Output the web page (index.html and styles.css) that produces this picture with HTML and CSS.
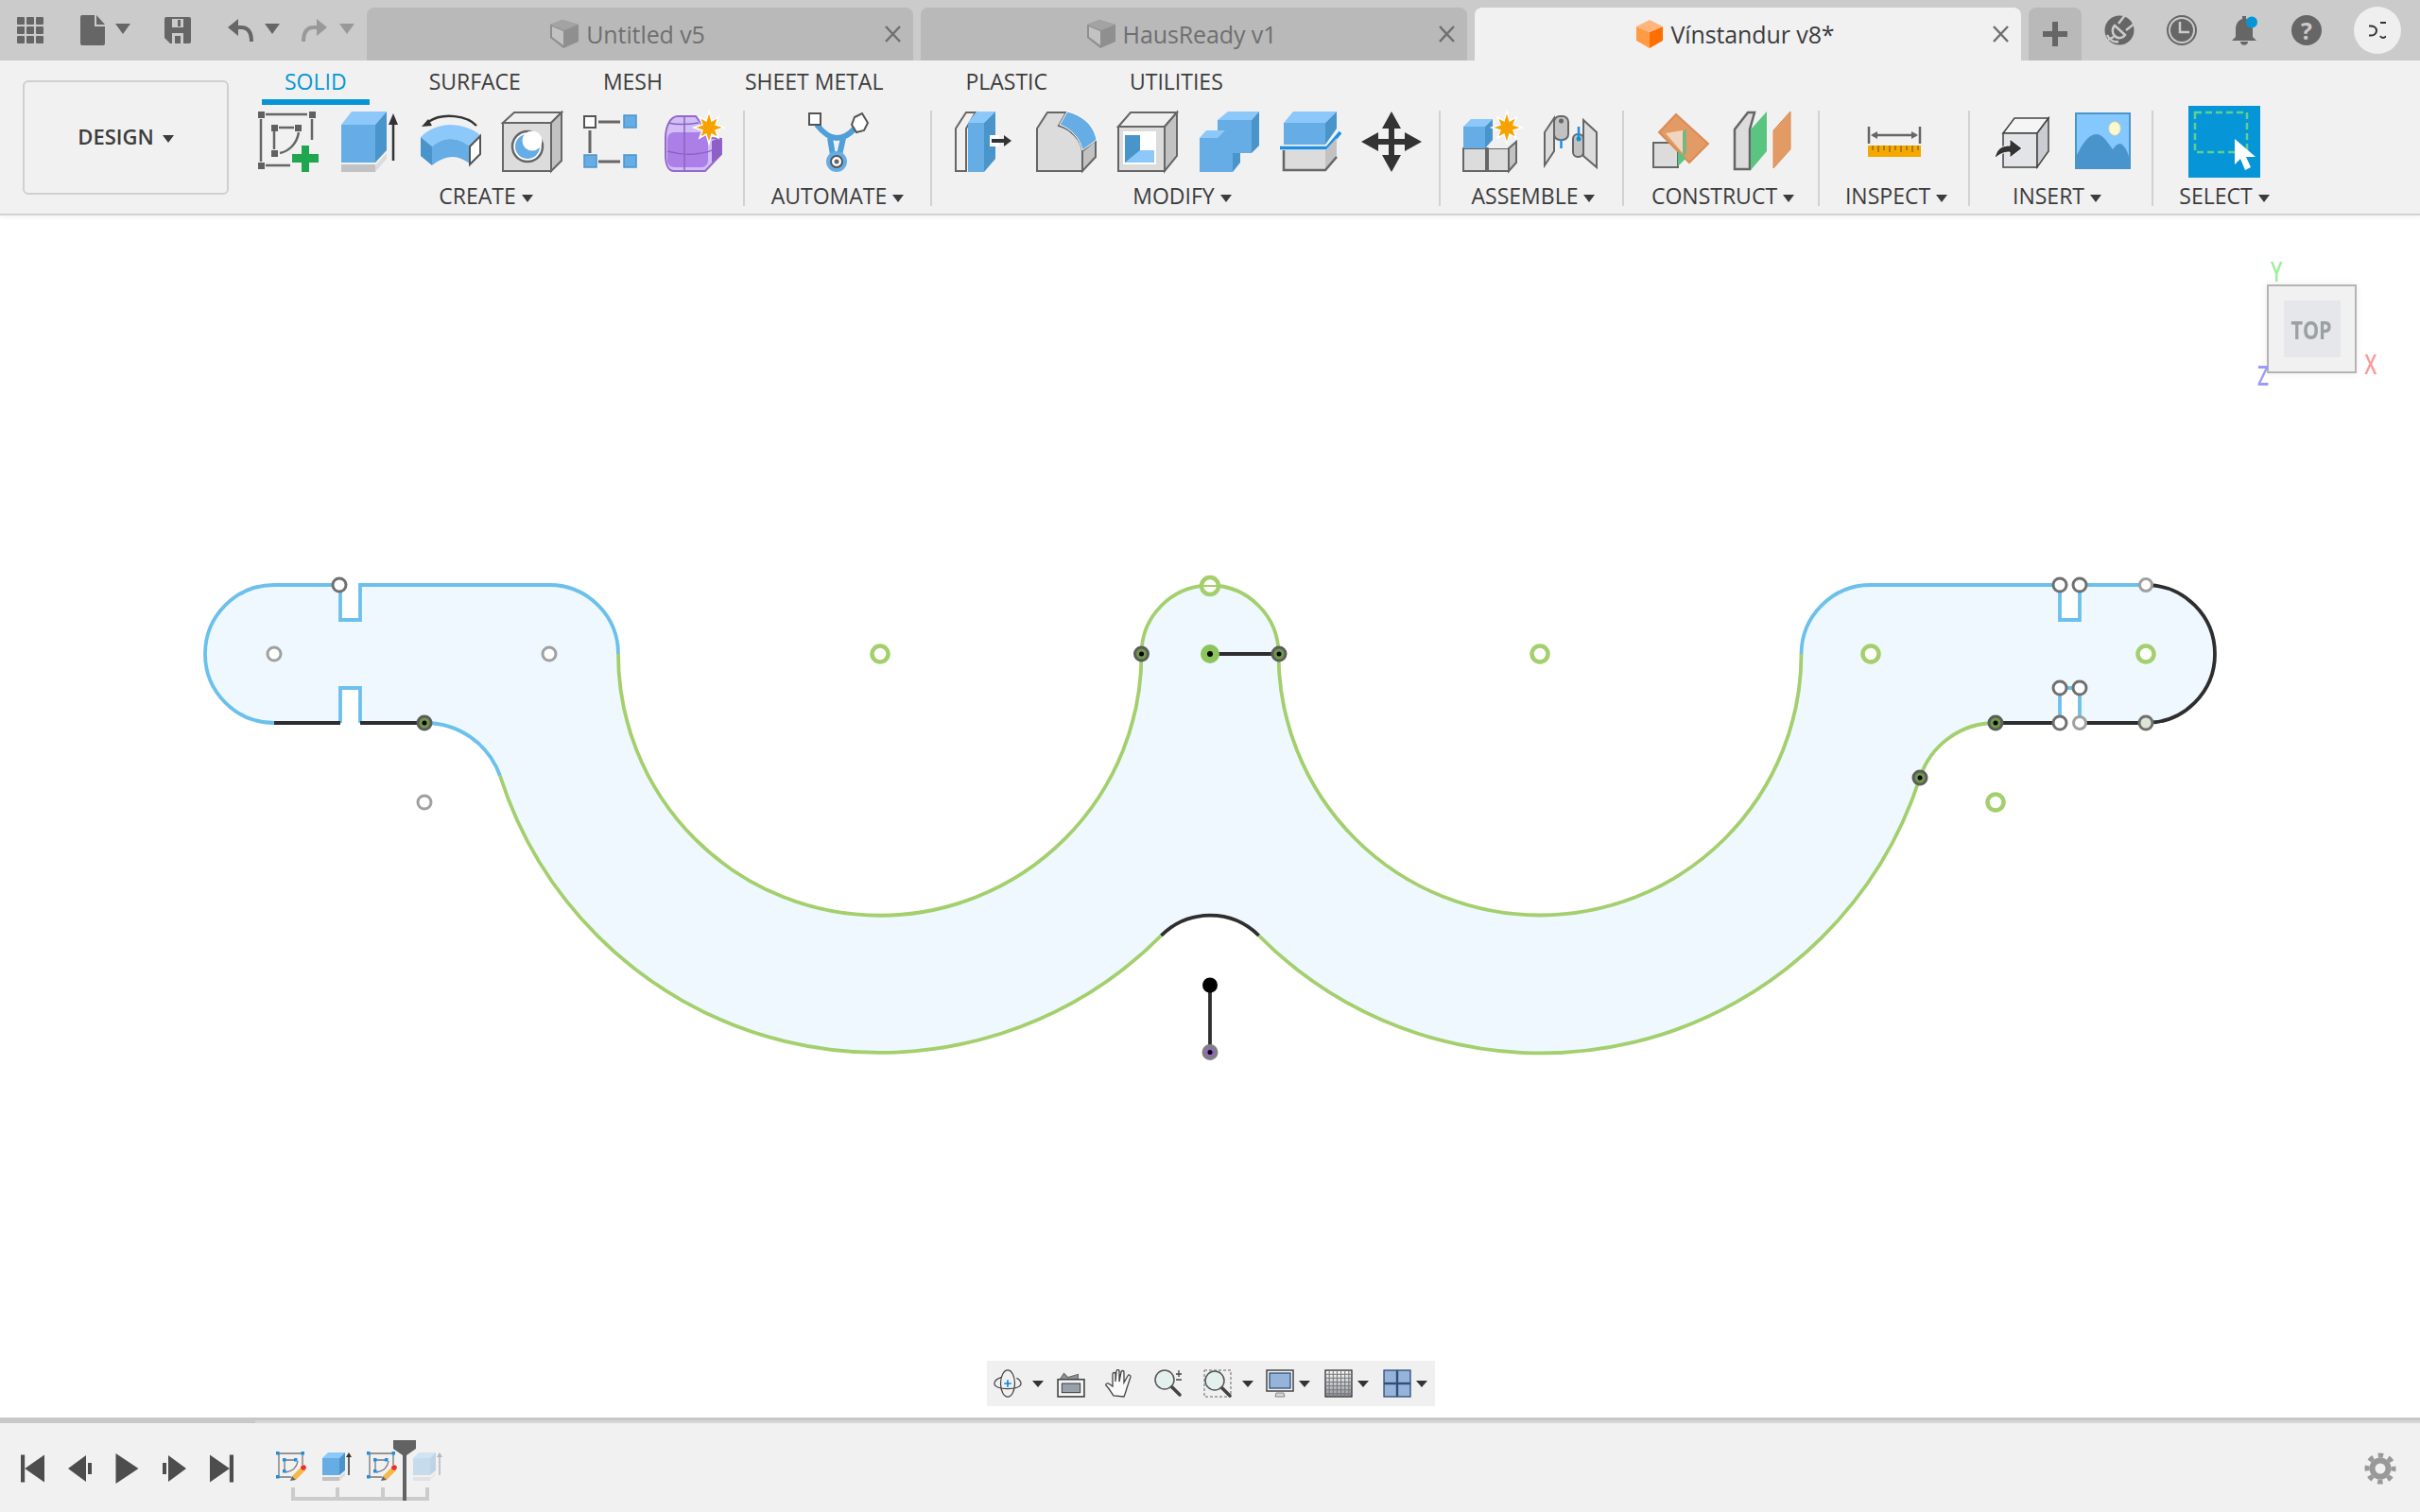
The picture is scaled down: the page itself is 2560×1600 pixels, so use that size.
FILE: index.html
```html
<!DOCTYPE html>
<html lang="en">
<head>
<meta charset="utf-8">
<title>Fusion</title>
<link rel="stylesheet" href="styles.css">
</head>
<body>
<svg class="defs" width="0" height="0" aria-hidden="true">
  <defs>
    <polygon id="star" class="star" points="0,-17 3,-7 10,-11 7,-3 16,0 7,3 10,11 3,7 0,17 -3,7 -10,11 -7,3 -16,0 -7,-3 -10,-11 -3,-7"/>
    <g id="cube-grey">
      <polygon class="tc-r" points="1,6 14,1 31,6 31,24 15,31 1,20"/>
      <polygon class="tc-t" points="1,6 14,1 31,6 16,12"/>
      <polygon class="tc-l" points="3,8 15,13 15,28 3,19"/>
    </g>
    <g id="mini-sketch">
      <path class="mini-line" d="M3 2H28M3 2V27M3 27H16M28 2V14M9 9H20M9 9V20M23 10C22 17 17 21 10 22"/>
      <rect class="mini-pt" x="0" y="0" width="3.500" height="3.500"/><rect class="mini-pt" x="26.500" y="0" width="3.500" height="3.500"/><rect class="mini-pt" x="0" y="25" width="3.500" height="3.500"/>
      <rect class="mini-pt" x="7" y="7" width="3.500" height="3.500"/><rect class="mini-pt" x="19" y="7" width="3.500" height="3.500"/><rect class="mini-pt" x="7" y="19" width="3.500" height="3.500"/>
      <polygon class="mini-pen" points="17,26 27,16 31,20 21,30"/>
      <polygon class="mini-tip" points="15,31 17,26 21,30"/>
      <circle class="mini-red" cx="29" cy="17" r="2.800"/>
    </g>
  </defs>
</svg>

<div class="app">
  <header class="titlebar">
    <div class="qat">
      <svg class="qi" width="28" height="28" viewBox="0 0 28 28"><g class="ti"><rect x="0" y="0" width="8" height="8" rx="1"/><rect x="10" y="0" width="8" height="8" rx="1"/><rect x="20" y="0" width="8" height="8" rx="1"/><rect x="0" y="10" width="8" height="8" rx="1"/><rect x="10" y="10" width="8" height="8" rx="1"/><rect x="20" y="10" width="8" height="8" rx="1"/><rect x="0" y="20" width="8" height="8" rx="1"/><rect x="10" y="20" width="8" height="8" rx="1"/><rect x="20" y="20" width="8" height="8" rx="1"/></g></svg>
      <svg class="qi" width="26" height="32" viewBox="0 0 26 32"><path class="ti" d="M2 0H15V12H26V30Q26 32 24 32H2Q0 32 0 30V2Q0 0 2 0ZM17 0L26 10H17Z"/></svg>
      <i class="caret caret-q"></i>
      <svg class="qi" width="28" height="28" viewBox="0 0 28 28"><path class="ti" d="M2 0H26Q28 0 28 2V26Q28 28 26 28H6L0 22V2Q0 0 2 0Z"/><rect class="tb" x="8" y="2" width="12" height="9"/><rect class="ti" x="14" y="3" width="3" height="7"/><rect class="tb" x="8" y="17" width="12" height="11"/><rect class="ti" x="11" y="20" width="6" height="8"/></svg>
      <svg class="qi" width="27" height="24" viewBox="0 0 27 24"><polygon class="ti" points="0,9 11,0 11,18"/><path class="ts" d="M9 9H14C21 9 25 14 25 24"/></svg>
      <i class="caret caret-q"></i>
      <svg class="qi" width="27" height="24" viewBox="0 0 27 24"><polygon class="ti-off" points="27,9 16,0 16,18"/><path class="ts-off" d="M18 9H13C6 9 2 14 2 24"/></svg>
      <i class="caret caret-q caret-off"></i>
    </div>
    <div class="tabs">
      <div class="doc-tab">
        <div class="doc-title"><svg width="32" height="32" viewBox="0 0 32 32"><use href="#cube-grey"/></svg><span>Untitled v5</span></div>
        <svg class="close" width="19" height="18" viewBox="0 0 19 18"><path class="close-x" d="M2 1L17 17M17 1L2 17"/></svg>
      </div>
      <div class="doc-tab">
        <div class="doc-title"><svg width="32" height="32" viewBox="0 0 32 32"><use href="#cube-grey"/></svg><span>HausReady v1</span></div>
        <svg class="close" width="19" height="18" viewBox="0 0 19 18"><path class="close-x" d="M2 1L17 17M17 1L2 17"/></svg>
      </div>
      <div class="doc-tab doc-tab-active">
        <div class="doc-title"><svg width="30" height="32" viewBox="0 0 30 32"><polygon class="oc-r" points="15,14 29,8 29,23 15,31"/><polygon class="oc-l" points="1,8 15,14 15,31 1,23"/><polygon class="oc-t" points="15,1 29,8 15,14 1,8"/></svg><span>Vínstandur v8*</span></div>
        <svg class="close" width="19" height="18" viewBox="0 0 19 18"><path class="close-x" d="M2 1L17 17M17 1L2 17"/></svg>
      </div>
      <div class="new-tab"><svg width="26" height="26" viewBox="0 0 26 26"><path class="ti" d="M10 0H16V10H26V16H16V26H10V16H0V10H10Z"/></svg></div>
    </div>
    <div class="tools">
      <svg width="32" height="32" viewBox="0 0 32 32"><circle class="ti" cx="16" cy="16" r="15.500"/><path class="tool-cut" d="M22 0L15 9M32 9L23 16M11 11L22 21C19 25 14 25 11 22C8 19 8 14 11 11ZM10 23L4 26M3 21C6 27 11 29 15 28"/></svg>
      <svg width="32" height="32" viewBox="0 0 32 32"><circle class="tool-ring" cx="16" cy="16" r="15"/><circle class="ti" cx="16" cy="16" r="12"/><path class="tool-cut" d="M14 7V18H24"/></svg>
      <svg width="32" height="32" viewBox="0 0 32 32"><path class="ti" d="M14 1H18V4C23 6 25 10 25 15V23L29 27H3L7 23V15C7 10 9 6 14 4ZM12 28H20C20 33 12 33 12 28Z"/><circle class="bell-dot" cx="24" cy="7.500" r="6"/></svg>
      <div class="help">?</div>
      <div class="avatar"><svg width="18" height="18" viewBox="0 0 18 18"><path class="avatar-s" d="M0 4.500C5 4 8 6 8 9.500C8 13 5 15 0 14.500M12 1H18M12 15C13 17.500 17 17.500 18 15"/></svg></div>
    </div>
  </header>

  <section class="ribbon">
    <button class="design-btn">DESIGN<i class="caret caret-d"></i></button>
    <div class="ribbon-main">
      <nav class="ribbon-tabs">
        <span class="rtab rtab-active">SOLID</span>
        <span class="rtab">SURFACE</span>
        <span class="rtab">MESH</span>
        <span class="rtab">SHEET METAL</span>
        <span class="rtab">PLASTIC</span>
        <span class="rtab">UTILITIES</span>
      </nav>
      <div class="groups">
        <div class="group g-create">
          <div class="icons">
            <svg class="ic" viewBox="0 0 64 64"><path class="ln" d="M8 3H52M3 8V53M8 57H34M57 8V30M22 17H38M17 21V40M43 22C41 34 33 42 23 44"/><rect class="pt" x="0" y="0" width="7" height="7"/><rect class="pt" x="54" y="0" width="7" height="7"/><rect class="pt" x="0" y="54" width="7" height="7"/><rect class="pt" x="14" y="14" width="7" height="7"/><rect class="pt" x="39" y="14" width="7" height="7"/><rect class="pt" x="14" y="41" width="7" height="7"/><path class="plus" d="M46 36H54V45H64V54H54V64H46V54H36V45H46Z"/></svg>
            <svg class="ic" viewBox="0 0 64 64"><polygon class="b1" points="2,14 13,0 50,0 38,14"/><rect class="b2" x="2" y="14" width="36" height="40"/><polygon class="b3" points="38,14 50,0 50,41 38,54"/><rect class="gy3" x="2" y="56" width="36" height="8"/><polygon class="gy2" points="38,64 50,50 50,44 38,57"/><path class="arrow-l" d="M57 6V52"/><polygon class="dk" points="57,2 62,14 52,14"/></svg>
            <svg class="ic" viewBox="0 0 64 64"><path class="arc-ar" d="M59 15C50 5 24 0 8 11"/><polygon class="dk" points="1,16 8,8 12,15"/><path class="b1" d="M0 27C8 19 20 14 31 14C43 14 55 18 63 25L52 37C46 32 39 29 31 29C24 29 18 32 12 37Z"/><path class="b2" d="M12 37C18 32 24 29 31 29C39 29 46 32 52 37V55C46 51 40 48 34 48C26 48 18 52 12 57Z"/><path class="b3" d="M0 27L12 37V57L0 47Z"/><polygon class="white-ol" points="52,37 63,26 63,45 52,56"/></svg>
            <svg class="ic" viewBox="0 0 64 64"><polygon class="gy1 ol" points="1,12 13,1 63,1 52,12"/><rect class="gy2 ol" x="1" y="12" width="51" height="51"/><polygon class="gy3 ol" points="52,12 63,1 63,52 52,63"/><circle class="ring" cx="27" cy="37" r="16"/><circle class="b2" cx="27" cy="37" r="13"/><circle class="white" cx="32" cy="31" r="10.500"/></svg>
            <svg class="ic" viewBox="0 0 64 64"><rect class="white-ol" x="1" y="5" width="12" height="12"/><rect class="b2 blue-ol" x="43" y="4" width="13" height="13"/><rect class="b2 blue-ol" x="1" y="46" width="13" height="13"/><rect class="b2 blue-ol" x="43" y="46" width="13" height="13"/><path class="ln ln-thick" d="M16 11H39M16 53H39M7 20V44"/></svg>
            <svg class="ic" viewBox="0 0 64 64"><path class="p1" d="M1 28C1 14 7 5 14 5H33L50 28L60 29V45L43 63H10C4 63 1 56 1 46Z"/><rect class="p2" x="3" y="22" width="43" height="37" rx="7"/><polygon class="p3" points="50,31 60,28 60,46 50,54"/><path class="p-ln" d="M21 6V62M3 42C20 47 44 47 60 36M4 12C12 14 24 14 36 12"/><use href="#star" x="47" y="17"/></svg>
          </div>
          <div class="glabel">CREATE<i class="caret"></i></div>
        </div>
        <div class="group g-auto">
          <div class="icons">
            <svg class="ic" viewBox="0 0 64 64"><path class="y-arm" d="M10 14C18 24 24 28 31 28C38 28 44 25 50 18M24 28L27 46M38 28L34 46"/><rect class="white-ol" x="2" y="2" width="12" height="12"/><polygon class="white-ol" points="50,6 58,2 64,12 60,20 52,22 47,14"/><circle class="b2" cx="31" cy="53" r="11"/><circle class="white-ol" cx="31" cy="53" r="6"/><circle class="gray-dot" cx="31" cy="53" r="2.500"/></svg>
          </div>
          <div class="glabel">AUTOMATE<i class="caret"></i></div>
        </div>
        <div class="group g-modify">
          <div class="icons">
            <svg class="ic" viewBox="0 0 64 64"><path class="gy1 ol" d="M12 63H1V18L12 1H22L12 18Z"/><polygon class="b1" points="14,12 23,0 43,0 31,12"/><rect class="b2" x="14" y="12" width="17" height="52"/><polygon class="b3" points="31,12 43,0 43,50 31,64"/><rect class="white" x="37" y="25" width="10" height="12"/><path class="arrow-l arrow-b" d="M39 31H54"/><polygon class="dk" points="52,25 60,31 52,37"/></svg>
            <svg class="ic" viewBox="0 0 64 64"><path class="gy2 ol" d="M1 63V18L12 1H32L24 15C36 18 48 30 49 42V63Z"/><polygon class="gy3 ol" points="49,42 63,30 63,48 49,63"/><path class="b2 arc-w" d="M33 0C50 4 62 16 64 30L49 41C47 29 37 18 25 14Z"/></svg>
            <svg class="ic" viewBox="0 0 64 64"><polygon class="gy1 ol" points="1,16 14,1 63,1 50,16"/><rect class="gy2 ol" x="1" y="16" width="49" height="47"/><polygon class="gy3 ol" points="50,16 63,1 63,47 50,63"/><rect class="white" x="6" y="21" width="35" height="35"/><rect class="b3" x="8" y="25" width="16" height="29"/><polygon class="b1" points="8,54 24,41 39,41 39,54"/></svg>
            <svg class="ic" viewBox="0 0 64 64"><polygon class="b1" points="20,9 31,0 64,0 56,9"/><rect class="b2" x="20" y="9" width="36" height="35"/><polygon class="b3" points="56,9 64,0 64,36 56,44"/><polygon class="b1" points="1,28 8,20 28,20 20,28"/><rect class="b2" x="1" y="28" width="35" height="36"/><polygon class="b3" points="36,44 44,44 44,54 36,64"/></svg>
            <svg class="ic" viewBox="0 0 64 64"><polygon class="b1" points="4,12 14,0 60,0 48,12"/><rect class="b2" x="4" y="12" width="44" height="23"/><polygon class="b3" points="48,12 60,0 60,18 48,35"/><path class="bl-line" d="M0 38.500H50L64 22"/><rect class="gy2" x="4" y="41" width="44" height="21"/><polygon class="gy3" points="48,41 60,28 60,48 48,62"/><path class="ol-line" d="M4 41V62H48L60 48"/></svg>
            <svg class="ic" viewBox="0 0 64 64"><path class="dk" d="M32 0L42 18H35V29H46V22L64 32L46 42V35H35V46H42L32 64L22 46H29V35H18V42L0 32L18 22V29H29V18H22Z"/></svg>
          </div>
          <div class="glabel">MODIFY<i class="caret"></i></div>
        </div>
        <div class="group g-assemble">
          <div class="icons">
            <svg class="ic" viewBox="0 0 64 64"><rect class="gy2 ol" x="1" y="39" width="24" height="24"/><rect class="gy2 ol" x="27" y="39" width="22" height="24"/><polygon class="gy1" points="27,39 36,32 58,32 49,39"/><polygon class="gy3 ol" points="49,39 57,32 57,54 49,63"/><polygon class="b1" points="1,16 9,8 32,8 24,16"/><rect class="b2" x="1" y="16" width="23" height="23"/><polygon class="b3" points="24,16 32,8 32,30 24,39"/><use href="#star" x="47" y="17"/></svg>
            <svg class="ic" viewBox="0 0 64 64"><polygon class="gy2 ol" points="1,57 1,22 11,7 11,42"/><polygon class="gy2 ol" points="42,9 56,22 56,59 42,47"/><rect class="gy3 ol" x="11" y="5" width="15" height="25" rx="6"/><rect class="gy3 ol" x="31" y="24" width="11" height="24" rx="5"/><path class="bl-line bl-thin" d="M18.500 29V39M37 16V29"/><circle class="gray-dot" cx="18.500" cy="10" r="2.500"/><circle class="bell-dot" cx="37" cy="29" r="2.500"/></svg>
          </div>
          <div class="glabel">ASSEMBLE<i class="caret"></i></div>
        </div>
        <div class="group g-construct">
          <div class="icons">
            <svg class="ic" viewBox="0 0 64 64"><rect class="gy2 ol-open" x="1" y="33" width="26" height="26"/><polygon class="org-pl" points="25,3 59,34 39,54 7,22"/><polygon class="org-in" points="14,23 32,20 32,44"/><polygon class="gn" points="27,58 35,50 27,42"/><polygon class="gn-l" points="32,22 36,18 36,44 32,48"/></svg>
            <svg class="ic" viewBox="0 0 64 64"><path class="gy2 ol-open2" d="M1 61V19L15 1H22L17 19V61Z"/><polygon class="gn" points="18,62 35,42 35,0 18,19"/><polygon class="org" points="42,60 60,40 60,0 42,20"/></svg>
          </div>
          <div class="glabel">CONSTRUCT<i class="caret"></i></div>
        </div>
        <div class="group g-inspect">
          <div class="icons">
            <svg class="ic" viewBox="0 0 64 64"><path class="ln" d="M5 16V34M59 16V34M9 25H55"/><polygon class="ln-f" points="7,25 14,21 14,29"/><polygon class="ln-f" points="57,25 50,21 50,29"/><rect class="ruler" x="4" y="36" width="56" height="12"/><path class="ruler-t" d="M9 36V41M15 36V43M21 36V41M27 36V43M33 36V41M39 36V43M45 36V41M51 36V43M57 36V41"/></svg>
          </div>
          <div class="glabel">INSPECT<i class="caret"></i></div>
        </div>
        <div class="group g-insert">
          <div class="icons">
            <svg class="ic" viewBox="0 0 64 64"><polygon class="c-top" points="10,23 22,7 58,7 46,23"/><rect class="c-front" x="10" y="23" width="36" height="36"/><polygon class="c-side" points="46,23 58,7 58,42 46,59"/><path class="dk-outline" d="M1 50C3 38 10 36 17 36V29L30 39L17 49V43C11 43 6 45 1 50Z"/></svg>
            <svg class="ic" viewBox="0 0 64 64"><rect class="img-sky" x="1" y="2" width="57" height="58"/><path class="b3" d="M2 46C10 30 16 24 23 24C30 24 35 34 40 40C44 34 48 32 51 36C54 39 56 44 57 48V59H2Z"/><ellipse class="sun" cx="42" cy="18" rx="6" ry="7"/></svg>
          </div>
          <div class="glabel">INSERT<i class="caret"></i></div>
        </div>
        <div class="group g-select">
          <div class="icons">
            <svg class="sel" viewBox="0 0 76 76"><rect class="sel-bg" width="76" height="76"/><rect class="sel-dash" x="7" y="7" width="55" height="42"/><path class="white" d="M49 35V62L55 56L60 68L66 65L61 54L71 54Z"/></svg>
          </div>
          <div class="glabel">SELECT<i class="caret"></i></div>
        </div>
      </div>
    </div>
  </section>

  <main class="canvas">
    <svg class="sketch" viewBox="0 228 2560 1272" width="2560" height="1272">
      <path class="profile" d="M290 619H360V656H381V619H581A73 73 0 0 1 654 692A276.500 276.500 0 0 0 1207.500 692A72.500 72.500 0 0 1 1352.500 692A276.500 276.500 0 0 0 1905.500 692A73.500 73.500 0 0 1 1979 619H2179V656H2200V619H2270A73 73 0 0 1 2270 765H2200V728H2179V765H2111A84 84 0 0 0 2031 823A421 421 0 0 1 1331.600 990A73 73 0 0 0 1228.400 990A421 421 0 0 1 529 821A84 84 0 0 0 449 765H381V728H360V765H290A73 73 0 0 1 290 619Z"/>
      <path class="s-blue" d="M290 765A73 73 0 0 1 290 619H360V656H381V619H581A73 73 0 0 1 654 692M360 765V728H381V765M449 765A84 84 0 0 1 529 821M1905.500 692A73.500 73.500 0 0 1 1979 619H2179V656H2200V619H2270M2179 765V728H2200V765"/>
      <path class="s-green" d="M654 692A276.500 276.500 0 0 0 1207.500 692A72.500 72.500 0 0 1 1352.500 692A276.500 276.500 0 0 0 1905.500 692M529 821A421 421 0 0 0 1228.400 990M1331.600 990A421 421 0 0 0 2031 823A84 84 0 0 1 2111 765"/>
      <path class="s-black" d="M290 765H360M381 765H449M2111 765H2179M2200 765H2270A73 73 0 0 0 2270 619M1228.400 990A73 73 0 0 1 1331.600 990M1280 1042V1113M1280 692H1353"/>
      <g class="pt-grey">
        <circle cx="290" cy="692" r="7"/><circle cx="581" cy="692" r="7"/><circle cx="449" cy="849" r="7"/><circle cx="2270" cy="619" r="6.500"/><circle cx="2200" cy="765" r="6.500"/>
      </g>
      <g class="pt-dark">
        <circle cx="359" cy="619" r="7"/><circle cx="2179" cy="619" r="7"/><circle cx="2200" cy="619" r="7"/><circle cx="2179" cy="728" r="7"/><circle cx="2200" cy="728" r="7"/><circle cx="2179" cy="765" r="7"/>
      </g>
      <g class="pt-green">
        <circle cx="931" cy="692" r="8.500"/><circle cx="1629" cy="692" r="8.500"/><circle cx="1979" cy="692" r="8.500"/><circle cx="2270" cy="692" r="8.500"/><circle cx="2111" cy="849" r="8.500"/><circle cx="1280" cy="620" r="9"/>
      </g>
      <path class="s-green s-thin" d="M1272 620H1288"/>
      <circle class="pt-mist" cx="2270" cy="765" r="7"/>
      <g class="pt-on">
        <circle cx="449" cy="765" r="7"/><circle cx="1207.500" cy="692" r="7"/><circle cx="1353" cy="692" r="7"/><circle cx="2111" cy="765" r="7"/><circle cx="2031" cy="823" r="7"/>
      </g>
      <circle class="pt-center" cx="1280" cy="692" r="10"/>
      <circle class="pt-purple" cx="1280" cy="1113.500" r="7"/>
      <g class="pt-core">
        <circle cx="449" cy="765" r="2.500"/><circle cx="1207.500" cy="692" r="2.500"/><circle cx="1353" cy="692" r="2.500"/><circle cx="2111" cy="765" r="2.500"/><circle cx="2031" cy="823" r="2.500"/><circle cx="1280" cy="692" r="3"/><circle cx="1280" cy="1113.500" r="2.500"/><circle cx="1280" cy="1042.500" r="8"/>
      </g>
    </svg>

    <div class="viewcube">
      <span class="axis axis-y">Y</span>
      <div class="cube-face"><div class="cube-inner"><span>TOP</span></div></div>
      <span class="axis axis-x">X</span>
      <span class="axis axis-z">Z</span>
    </div>

    <div class="navbar">
      <svg class="nv" viewBox="0 0 32 32"><ellipse class="nv-l" cx="16" cy="16" rx="8" ry="15"/><path class="nv-l" d="M9 9C3 11 1 14 1 16C1 20 8 22 16 22C24 22 31 20 31 16C31 14 29 11 26 10"/><path class="nv-plus" d="M16 12V20M12 16H20"/></svg>
      <i class="caret caret-n"></i>
      <svg class="nv" viewBox="0 0 28 28"><polygon class="nv-gray" points="3,10 7,4 11,8 21,5 21,10"/><rect class="nv-frame" x="1" y="10" width="26" height="17"/><rect class="nv-grad" x="5" y="14" width="18" height="9"/></svg>
      <svg class="nv" viewBox="0 0 30 30"><path class="nv-hand" d="M9 28C6 24 5 21 1 17C0 15 3 14 5 16L8 18V5C8 3 11 3 11 5V13L12 2C12 0 15 0 15 2V13L17 3C17 1 20 1 20 3V14L24 7C25 5 27 6 27 8L23 20C22 24 21 26 20 29Z"/></svg>
      <svg class="nv" viewBox="0 0 30 30"><circle class="nv-glass" cx="11" cy="11" r="10"/><path class="nv-handle" d="M19 19L27 27"/><path class="nv-l" d="M23 5H29M26 1V8M23 11H29"/></svg>
      <svg class="nv" viewBox="0 0 30 30"><rect class="nv-dash" x="1" y="1" width="28" height="28"/><circle class="nv-glass" cx="12" cy="12" r="10"/><path class="nv-handle" d="M20 20L28 28"/></svg>
      <i class="caret caret-n"></i>
      <svg class="nv" viewBox="0 0 30 30"><rect class="nv-frame" x="1" y="1" width="28" height="22"/><rect class="nv-blue" x="4" y="4" width="22" height="16"/><path class="nv-stand" d="M11 25H19L20 29H10Z"/></svg>
      <i class="caret caret-n"></i>
      <svg class="nv" viewBox="0 0 29 29"><defs><linearGradient id="gridfade" x1="0" y1="0" x2="0" y2="1"><stop offset="0" stop-color="#ffffff"/><stop offset="1" stop-color="#8f96a3"/></linearGradient></defs><rect class="nv-gridbg" x="1" y="1" width="27" height="27"/><path class="nv-grid" d="M5 1V28M9 1V28M13 1V28M17 1V28M21 1V28M25 1V28M1 5H28M1 9H28M1 13H28M1 17H28M1 21H28M1 25H28"/></svg>
      <i class="caret caret-n"></i>
      <svg class="nv" viewBox="0 0 29 29"><g class="nv-blue"><rect x="1" y="1" width="13" height="13"/><rect x="15" y="1" width="13" height="13"/><rect x="1" y="15" width="13" height="13"/><rect x="15" y="15" width="13" height="13"/></g></svg>
      <i class="caret caret-n"></i>
    </div>
  </main>

  <footer class="timeline">
    <div class="player">
      <svg class="pb" viewBox="0 0 24 28"><path class="pb-f" d="M0 0H4V28H0ZM24 0V28L4 14Z"/></svg>
      <svg class="pb" viewBox="0 0 25 28"><path class="pb-f" d="M19 0V28L0 14ZM21 8H25V20H21Z"/></svg>
      <svg class="pb" viewBox="0 0 24 32"><path class="pb-f" d="M0 0L24 16L0 32Z"/></svg>
      <svg class="pb" viewBox="0 0 25 28"><path class="pb-f" d="M6 0V28L25 14ZM0 8H4V20H0Z"/></svg>
      <svg class="pb" viewBox="0 0 24 28"><path class="pb-f" d="M20 0H24V28H20ZM0 0V28L20 14Z"/></svg>
    </div>
    <div class="history">
      <div class="hist-items">
        <svg class="hi" viewBox="0 0 32 32"><use href="#mini-sketch"/></svg>
        <svg class="hi" viewBox="0 0 32 32"><polygon class="b1" points="1,7 7,1 25,1 19,7"/><rect class="b2" x="1" y="7" width="18" height="18"/><polygon class="b3" points="19,7 25,1 25,20 19,25"/><rect class="gy3" x="1" y="27" width="18" height="4"/><polygon class="gy2" points="19,31 25,25 25,22 19,27"/><path class="arrow-m" d="M29 3V25"/><polygon class="dk" points="29,1 32,6 26,6"/></svg>
        <svg class="hi" viewBox="0 0 32 32"><use href="#mini-sketch"/></svg>
        <svg class="hi hi-ghost" viewBox="0 0 32 32"><polygon class="b1" points="1,7 7,1 25,1 19,7"/><rect class="b2" x="1" y="7" width="18" height="18"/><polygon class="b3" points="19,7 25,1 25,20 19,25"/><rect class="gy3" x="1" y="27" width="18" height="4"/><polygon class="gy2" points="19,31 25,25 25,22 19,27"/><path class="arrow-m" d="M29 3V25"/><polygon class="dk" points="29,1 32,6 26,6"/></svg>
      </div>
      <div class="hist-rail"><i></i><i></i><i></i><i></i></div>
      <svg class="marker" width="24" height="64" viewBox="0 0 24 64"><path class="marker-f" d="M0 0H24V9L14 16V64H10V16L0 9Z"/></svg>
    </div>
    <svg class="gear" width="34" height="34" viewBox="0 0 34 34"><circle class="gear-t" cx="17" cy="17" r="14"/><circle class="gear-b" cx="17" cy="17" r="8.500"/></svg>
  </footer>
</div>
</body>
</html>
```
FILE: styles.css
```css
* { box-sizing: border-box; }
html, body { margin: 0; padding: 0; height: 100%; }
body { font-family: "Open Sans", "Noto Sans", sans-serif; color: #3c3c3c; background: #fff; overflow: hidden; }
.defs { position: absolute; }
.app { width: 2560px; height: 1600px; display: flex; flex-direction: column; }

/* Title bar */
.titlebar { height: 64px; background: #cbcbcb; display: flex; flex: none; }
.qat { width: 388px; flex: none; display: grid; grid-template-columns: 18px 67px 37px 52px 67px 39px 39px 40px 29px; grid-template-areas: ". a b c d e f g h"; align-items: center; justify-items: start; }
.qat > :nth-child(1) { grid-area: a; }
.qat > :nth-child(2) { grid-area: b; }
.qat > :nth-child(3) { grid-area: c; }
.qat > :nth-child(4) { grid-area: d; }
.qat > :nth-child(5) { grid-area: e; }
.qat > :nth-child(6) { grid-area: f; }
.qat > :nth-child(7) { grid-area: g; }
.qat > :nth-child(8) { grid-area: h; }
.ti { fill: #666; }
.tb { fill: #cbcbcb; }
.ts { fill: none; stroke: #666; stroke-width: 4; }
.ti-off { fill: #999; }
.ts-off { fill: none; stroke: #999; stroke-width: 4; }

.caret { display: inline-block; width: 0; height: 0; border-left: 6px solid transparent; border-right: 6px solid transparent; border-top: 8px solid #3c3c3c; margin-left: 6px; vertical-align: middle; }
.caret-q { border-left-width: 8px; border-right-width: 8px; border-top: 11px solid #666; margin-left: 0; margin-top: -4px; }
.caret-off { border-top-color: #999; }
.caret-d { margin-left: 9px; }
.caret-n { border-top: 7px solid #333; margin-left: 0; }

.tabs { display: flex; padding-top: 8px; height: 64px; }
.doc-tab { width: 578px; margin-right: 8px; background: #b9b9b9; border-radius: 8px 8px 0 0; display: flex; align-items: center; color: #6f6f6f; font-size: 25px; letter-spacing: -.1px; }
.doc-tab-active { background: #f1f1f1; color: #3c3c3c; }
.doc-title { flex: 1; display: flex; align-items: center; justify-content: center; gap: 7px; padding-left: 4px; }
.doc-title svg { display: block; }
.close { margin-right: 12px; flex: none; }
.close-x { fill: none; stroke: #707070; stroke-width: 2.500; }
.tc-r { fill: #8f8f8f; }
.tc-t { fill: #a3a3a3; }
.tc-l { fill: #c2c2c2; }
.oc-r { fill: #ff6f00; }
.oc-l { fill: #ff9a45; }
.oc-t { fill: #ffb57c; }
.new-tab { width: 56px; background: #b9b9b9; border-radius: 8px 8px 0 0; display: flex; align-items: center; justify-content: center; }

.tools { display: flex; gap: 34px; align-items: center; margin-left: 24px; height: 64px; padding-bottom: 1px; }
.tool-cut { fill: none; stroke: #cbcbcb; stroke-width: 2.500; }
.tool-ring { fill: none; stroke: #666; stroke-width: 2; }
.bell-dot { fill: #0696d7; }
.help { width: 32px; height: 32px; border-radius: 50%; background: #666; color: #cbcbcb; font-weight: 700; font-size: 25px; line-height: 32px; text-align: center; }
.avatar { width: 50px; height: 50px; border-radius: 50%; background: #efefef; display: flex; align-items: center; justify-content: center; }
.avatar-s { fill: none; stroke: #333; stroke-width: 2; }

/* Ribbon */
.ribbon { height: 164px; flex: none; background: #f1f1f1; border-bottom: 2px solid #d2d2d2; display: flex; box-shadow: 0 2px 4px rgba(0,0,0,.05); position: relative; z-index: 1; }
.design-btn { margin: 21px 0 0 24px; width: 218px; height: 121px; background: #f1f1f1; border: 2px solid #d0d0d0; border-radius: 6px; font: 600 22px "Open Sans", sans-serif; color: #3c3c3c; padding: 0 0 3px; flex: none; }
.ribbon-main { margin-left: 35px; display: flex; flex-direction: column; }
.ribbon-tabs { display: flex; gap: 39px; height: 47px; }
.rtab { padding: 3px 24px 0; font-size: 23px; line-height: 38px; height: 47px; color: #3c3c3c; }
.rtab-active { color: #0696d7; font-weight: 500; border-bottom: 6px solid #0696d7; }
.groups { display: flex; margin: 6px 0 0 -3px; }
.group { height: 101px; display: flex; flex-direction: column; align-items: center; border-right: 2px solid #d2d2d2; padding-top: 1px; flex: none; }
.g-create { width: 514px; padding-right: 20px; }
.g-auto { width: 198px; }
.g-modify { width: 538px; padding-left: 5px; }
.g-assemble { width: 194px; padding-left: 4px; }
.g-construct { width: 207px; padding-left: 4px; }
.g-inspect { width: 159px; }
.g-insert { width: 194px; padding-left: 8px; }
.g-select { width: 150px; border-right: 0; }
.icons { display: flex; gap: 22px; height: 64px; }
.ic { width: 64px; height: 64px; display: block; flex: none; overflow: visible; }
.sel { width: 76px; height: 76px; display: block; margin-top: -6px; }
.glabel { margin-top: 15px; font-size: 23px; line-height: 20px; white-space: nowrap; color: #3c3c3c; }
.g-create .glabel { margin-right: 12px; }
.g-modify .glabel { margin-right: 12px; }
.g-inspect .glabel { margin-left: 5px; }
.g-insert .glabel { margin-right: 16px; }

/* icon palette */
.b1 { fill: #8cc9fa; }
.b2 { fill: #65ade4; }
.b3 { fill: #4a94cc; }
.blue-ol { stroke: #4a94cc; stroke-width: 1.500; }
.gy1 { fill: #f0f0f0; }
.gy2 { fill: #dcdcdc; }
.gy3 { fill: #c2c2c2; }
.ol { stroke: #666; stroke-width: 2; }
.ol-open { stroke: #666; stroke-width: 2; }
.ol-open2 { stroke: #666; stroke-width: 2.500; }
.ln { fill: none; stroke: #666; stroke-width: 2.500; }
.ln-thick { stroke-width: 3; }
.ln-f { fill: #666; }
.pt { fill: #606060; }
.plus { fill: #1fa64f; }
.dk { fill: #333; }
.arrow-l { fill: none; stroke: #333; stroke-width: 2.500; }
.arrow-b { stroke-width: 4; }
.arrow-m { fill: none; stroke: #333; stroke-width: 1.500; }
.arc-ar { fill: none; stroke: #333; stroke-width: 2.500; }
.white { fill: #fff; }
.white-ol { fill: #fff; stroke: #555; stroke-width: 2; }
.ring { fill: #fff; stroke: #666; stroke-width: 2.500; }
.arc-w { stroke: #fff; stroke-width: 1; }
.gray-dot { fill: #666; }
.p1 { fill: #d2bdf6; stroke: #9469c9; stroke-width: 2; }
.p2 { fill: #ac7fe8; }
.p3 { fill: #8d60c8; }
.p-ln { fill: none; stroke: #8a64c0; stroke-width: 1.500; }
.star { fill: #f8a200; stroke: #fff; stroke-width: 1.500; }
.y-arm { fill: none; stroke: #4f9fd9; stroke-width: 6; }
.bl-line { fill: none; stroke: #1e8fe3; stroke-width: 3.500; }
.bl-thin { stroke-width: 2.500; }
.ol-line { fill: none; stroke: #666; stroke-width: 2.500; }
.org-pl { fill: #e39b66; stroke: #d98c55; stroke-width: 2; }
.org-in { fill: #f1d5c0; }
.org { fill: #e39b66; stroke: #d98c55; stroke-width: 1; }
.gn { fill: #5ac481; }
.gn-l { fill: #7ab67f; }
.ruler { fill: #f5a800; }
.ruler-t { fill: none; stroke: #9b6c00; stroke-width: 1.500; }
.c-top { fill: #f5f5f6; stroke: #444; stroke-width: 1.500; }
.c-front { fill: #e2e4e8; stroke: #444; stroke-width: 1.500; }
.c-side { fill: #c9ccd2; stroke: #444; stroke-width: 1.500; }
.dk-outline { fill: #333; stroke: #fff; stroke-width: 1; }
.img-sky { fill: #85c8ff; stroke: #4a94cc; stroke-width: 2; }
.sun { fill: #fdf7cb; stroke: #f0e8a8; stroke-width: 1; }
.sel-bg { fill: #0696d7; }
.sel-dash { fill: none; stroke: #5fd08f; stroke-width: 2.500; stroke-dasharray: 7 4; }

/* Canvas */
.canvas { flex: 1; position: relative; background: #fff; overflow: hidden; }
.sketch { display: block; filter: blur(.7px); }
.profile { fill: #eef8fe; }
.s-blue, .s-green, .s-black { fill: none; stroke-width: 3.800; }
.s-blue { stroke: #6cc0ec; }
.s-green { stroke: #a3cf6c; }
.s-black { stroke: #2e2e2e; }
.s-thin { stroke-width: 2; }
.pt-grey circle { fill: #fff; stroke: #a0a0a0; stroke-width: 3; }
.pt-dark circle { fill: #fff; stroke: #707070; stroke-width: 3; }
.pt-green circle { fill: #fff; stroke: #a3cf6c; stroke-width: 4.500; }
.pt-mist { fill: #dfe6d5; stroke: #707070; stroke-width: 3; }
.pt-on circle { fill: #6f9a4a; stroke: #5c5c5c; stroke-width: 3; }
.pt-center { fill: #8cc55c; }
.pt-purple { fill: #8f6bb5; stroke: #808080; stroke-width: 3; }
.pt-core circle { fill: #000; }

.viewcube { position: absolute; left: 2387px; top: 49px; width: 128px; height: 132px; filter: blur(.6px); }
.cube-face { position: absolute; left: 11px; top: 24px; width: 95px; height: 94px; background: #f1f1f1; border: 2px solid #b4b4b4; box-shadow: 0 0 8px rgba(0,0,0,.08); display: flex; align-items: center; justify-content: center; }
.cube-inner { width: 60px; height: 60px; background: #e5e7ea; display: flex; align-items: center; justify-content: center; }
.cube-inner span { font-size: 27px; font-weight: 700; color: #9ba0a4; transform: scaleX(.8); line-height: 1; }
.axis { position: absolute; font-size: 28px; line-height: 26px; font-weight: 600; transform: scaleX(.75); }
.axis-y { left: 13px; top: -3px; color: #a0eda0; }
.axis-x { left: 112px; top: 95px; color: #fb9a9a; }
.axis-z { left: -1px; top: 107px; color: #9a9cfb; }

.navbar { position: absolute; left: 1044px; top: 1212px; width: 474px; height: 48px; background: #f0f0f0; padding-left: 7px; display: grid; grid-template-columns: 41px 26px 51px 52px 52px 41px 25px 35px 27px 35px 27px 35px 12px; align-items: center; justify-items: start; }
.nv { width: 30px; height: 30px; display: block; }
.nv-l { fill: none; stroke: #444; stroke-width: 1.300; }
.nv-plus { fill: none; stroke: #0a8ad6; stroke-width: 1.800; }
.nv-gray { fill: #8e9296; stroke: #666; stroke-width: 1; }
.nv-frame { fill: #f6f6f6; stroke: #444; stroke-width: 1.500; }
.nv-grad { fill: #98a0ac; stroke: #444; stroke-width: 1; }
.nv-hand { fill: #fafafa; stroke: #444; stroke-width: 1.300; }
.nv-glass { fill: #e4f0ee; stroke: #555; stroke-width: 1.500; }
.nv-handle { fill: none; stroke: #444; stroke-width: 3.500; stroke-linecap: round; }
.nv-dash { fill: none; stroke: #666; stroke-width: 1; stroke-dasharray: 3 2; }
.nv-blue, .nv-blue rect { fill: #96b3da; stroke: #2f4f7a; stroke-width: 1.300; }
.nv-stand { fill: #d4d6d8; stroke: #888; stroke-width: 1; }
.nv-gridbg { fill: url(#gridfade); stroke: #333; stroke-width: 1.300; }
.nv-grid { fill: none; stroke: #777; stroke-width: 1; }

/* Timeline */
.timeline { height: 100px; flex: none; background: #f1f1f1; display: flex; align-items: flex-start; border-top: 6px solid #d6d6d6; position: relative; }
.timeline::before { content: ""; position: absolute; left: 0; top: -6px; width: 270px; height: 6px; background: #c8c8c8; }
.timeline::after { content: ""; position: absolute; left: 270px; right: 0; top: -6px; height: 3px; background: #c8c8c8; }
.player { display: flex; align-items: center; gap: 25px; width: 292px; height: 96px; padding-left: 22px; flex: none; }
.pb { width: 25px; height: 32px; display: block; flex: none; }
.pb-f { fill: #4d4d4d; }
.history { position: relative; width: 180px; height: 88px; flex: none; }
.hist-items { display: flex; gap: 16px; padding-top: 30px; }
.hi { width: 32px; height: 32px; display: block; flex: none; }
.hi-ghost { opacity: .3; }
.mini-line { fill: none; stroke: #777; stroke-width: 1.300; }
.mini-pt { fill: #1e8fe3; }
.mini-pen { fill: #f6b84a; }
.mini-tip { fill: #666; }
.mini-red { fill: #e8302a; }
.hist-rail { margin: 6px 0 0 16px; width: 146px; height: 14px; border-bottom: 4px solid #cbcbcb; display: flex; justify-content: space-between; }
.hist-rail i { display: block; width: 4px; height: 14px; background: #cbcbcb; }
.marker { position: absolute; left: 124px; top: 18px; }
.marker-f { fill: #626262; }
.gear { margin: 31px 25px 0 auto; display: block; }
.gear-t { fill: none; stroke: #999; stroke-width: 5; stroke-dasharray: 5.500 5.500; stroke-dashoffset: 2.750; }
.gear-b { fill: none; stroke: #999; stroke-width: 6; }
```
